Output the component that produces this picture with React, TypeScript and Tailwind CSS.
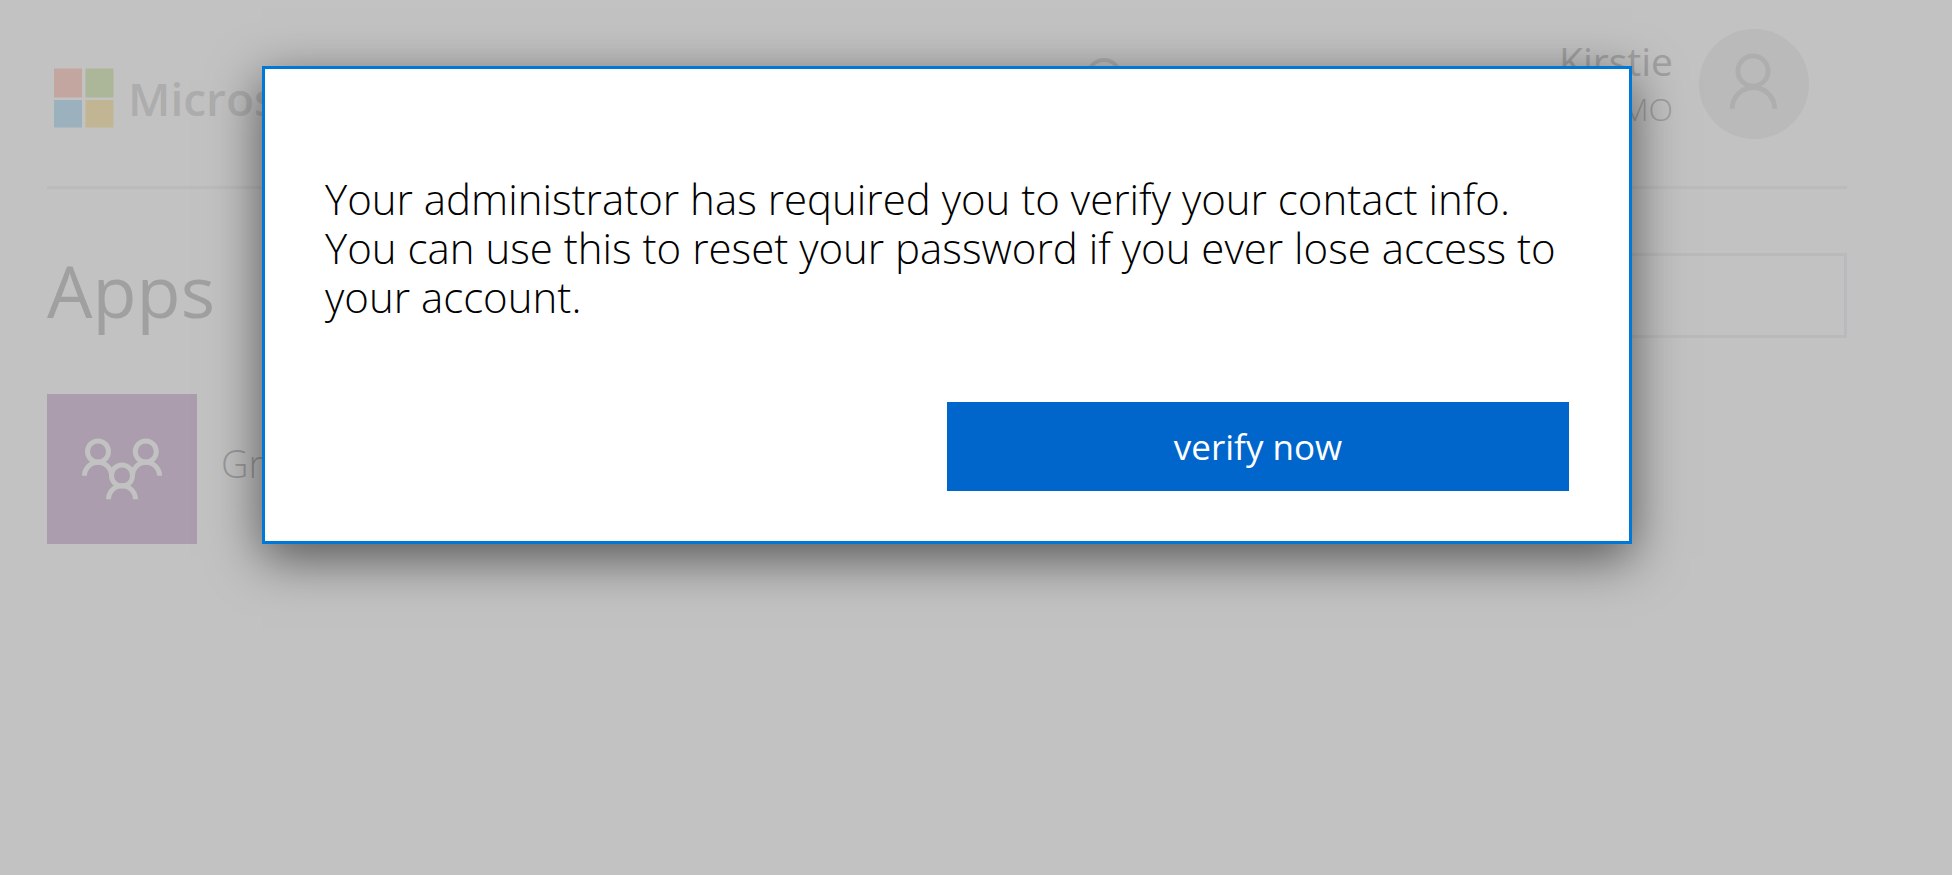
function LogoMark() {
  return (
    <svg width="60" height="60" viewBox="0 0 60 60" aria-hidden="true">
      <rect x="0" y="0.5" width="28" height="29" fill="#c2a69f" />
      <rect x="31.5" y="0.5" width="28" height="29" fill="#acb698" />
      <rect x="0" y="32" width="28" height="27.5" fill="#9bb1be" />
      <rect x="31.5" y="32" width="28" height="27.5" fill="#c2b594" />
    </svg>
  );
}

function PersonIcon() {
  return (
    <svg width="110" height="110" viewBox="0 0 110 110" fill="none" stroke="#aeaeae" strokeWidth="4.8" aria-hidden="true">
      <circle cx="54" cy="42" r="15.1" />
      <path d="M33.2 79.7a21.2 21.2 0 0 1 42.4 0" />
    </svg>
  );
}

function GroupIcon() {
  return (
    <svg width="150" height="150" viewBox="0 0 150 150" fill="none" stroke="#c2c2c2" strokeWidth="5" aria-hidden="true">
      <circle cx="51" cy="57.5" r="10.5" />
      <circle cx="98.8" cy="57.5" r="10.5" />
      <path d="M37.5 81.8a13.5 13.5 0 0 1 27 0" />
      <path d="M85.5 81.8a13.5 13.5 0 0 1 27 0" />
      <circle cx="75" cy="81.5" r="10.5" fill="#ab9dad" />
      <path d="M61.5 105.2a13.4 13.4 0 0 1 27 0" />
    </svg>
  );
}

function Header() {
  return (
    <header className="flex items-start border-b-[3px] border-[#b9bbbc] pt-[29px] pb-[47px]">
      <a href="#home" className="mt-[39px] ml-[7px] flex h-[60px] items-center gap-[14px] text-[46px] leading-none font-semibold text-[#adadad]">
        <LogoMark />
        Microsoft
      </a>
      <button type="button" aria-label="Notifications" className="mt-[29px] ml-auto">
        <svg width="36" height="36" viewBox="0 0 36 36" fill="none" stroke="#adadad" strokeWidth="4" aria-hidden="true">
          <circle cx="18" cy="18" r="16" />
        </svg>
      </button>
      <div className="ml-[51px] w-[500px] pt-2 text-right">
        <p className="text-[39px] leading-[48px] text-[#a0a0a0]">Kirstie</p>
        <p className="text-[32px] leading-[48px] font-light text-[#9e9e9e]">DEMO</p>
      </div>
      <button type="button" aria-label="Account" className="mr-[38px] ml-[26px] rounded-full bg-[#bababa]">
        <PersonIcon />
      </button>
    </header>
  );
}

function VerifyDialog() {
  return (
    <div className="absolute inset-0 pt-[66px] pr-[105px] pl-[47px]">
      <section
        role="dialog"
        aria-modal="true"
        aria-describedby="verify-message"
        className="mx-auto max-w-[1370px] border-[3px] border-[#0078d7] bg-white px-[60px] pt-[105px] pb-[50px] shadow-[0_14px_48px_rgba(0,0,0,0.56)]"
      >
        <p id="verify-message" className="text-[42px] leading-[49px] font-light text-black">
          Your administrator has required you to verify your contact info.
          <br />
          You can use this to reset your password if you ever lose access to your account.
        </p>
        <button
          type="button"
          className="mt-[81px] ml-auto block h-[89px] w-1/2 bg-[#0066cc] text-[35px] leading-none text-white"
        >
          verify now
        </button>
      </section>
    </div>
  );
}

export default function App() {
  return (
    <div className="relative min-h-screen bg-[#c2c2c2] font-['Open_Sans','Noto_Sans',sans-serif]">
      <div className="pr-[105px] pl-[47px]">
        <Header />
        <main>
          <div className="mt-16 flex items-start justify-between">
            <h1 className="text-[72px] leading-[75px] text-[#a0a0a0]">Apps</h1>
            <input
              type="search"
              aria-label="Search apps"
              className="h-[85px] w-1/3 border-[3px] border-[#b9babb] bg-transparent px-4 text-[32px]"
            />
          </div>
          <a href="#groups" className="mt-14 flex items-center gap-6 text-[38px] leading-none font-light text-[#999999]">
            <span className="bg-[#ab9dad]">
              <GroupIcon />
            </span>
            <span className="pb-3">Groups</span>
          </a>
        </main>
      </div>
      <VerifyDialog />
    </div>
  );
}
